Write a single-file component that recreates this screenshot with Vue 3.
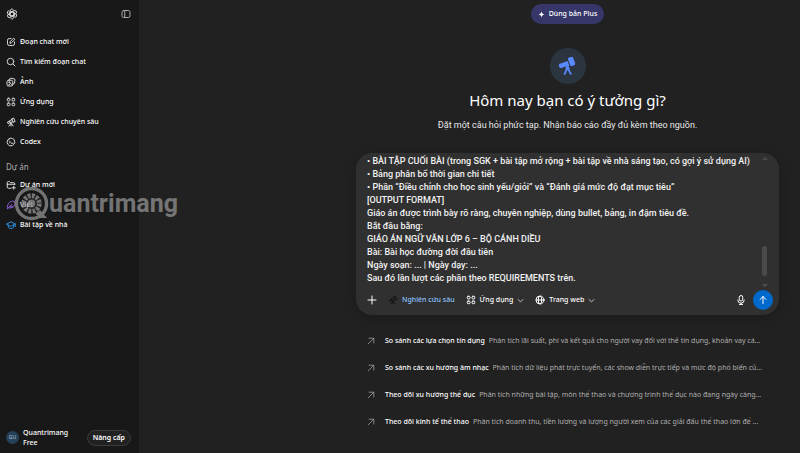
<script setup>
import { ref } from 'vue'

const nav = [
  { label: 'Đoạn chat mới', icon: 'edit' },
  { label: 'Tìm kiếm đoạn chat', icon: 'search' },
  { label: 'Ảnh', icon: 'images' },
  { label: 'Ứng dụng', icon: 'apps' },
  { label: 'Nghiên cứu chuyên sâu', icon: 'scope' },
  { label: 'Codex', icon: 'codex' },
]
const projects = [
  { label: 'Dự án mới', icon: 'folder' },
  { label: 'Viết', icon: 'pen' },
  { label: 'Bài tập về nhà', icon: 'cap' },
]
const suggestions = [
  { title: 'So sánh các lựa chọn tín dụng', text: 'Phân tích lãi suất, phí và kết quả cho người vay đối với thẻ tín dụng, khoản vay cá...' },
  { title: 'So sánh các xu hướng âm nhạc', text: 'Phân tích dữ liệu phát trực tuyến, các show diễn trực tiếp và mức độ phổ biến củ...' },
  { title: 'Theo dõi xu hướng thể dục', text: 'Phân tích những bài tập, môn thể thao và chương trình thể dục nào đang ngày càng...' },
  { title: 'Theo dõi kinh tế thể thao', text: 'Phân tích doanh thu, tiền lương và lượng người xem của các giải đấu thể thao lớn để ...' },
]
const prompt = ref(`• BÀI TẬP CUỐI BÀI (trong SGK + bài tập mở rộng + bài tập về nhà sáng tạo, có gợi ý sử dụng AI)
• Bảng phân bổ thời gian chi tiết
• Phần “Điều chỉnh cho học sinh yếu/giỏi” và “Đánh giá mức độ đạt mục tiêu”
[OUTPUT FORMAT]
Giáo án được trình bày rõ ràng, chuyên nghiệp, dùng bullet, bảng, in đậm tiêu đề.
Bắt đầu bằng:
GIÁO ÁN NGỮ VĂN LỚP 6 – BỘ CÁNH DIỀU
Bài: Bài học đường đời đầu tiên
Ngày soạn: ... | Ngày dạy: ...
Sau đó lần lượt các phần theo REQUIREMENTS trên.`)
</script>

<template>
  <svg class="sprite" aria-hidden="true">
    <symbol id="edit" viewBox="0 0 20 20"><path d="M10 3H6.500A3.500 3.500 0 0 0 3 6.500v7A3.500 3.500 0 0 0 6.500 17h7a3.500 3.500 0 0 0 3.500-3.500V10M8 12l.5-3 6-6a1.800 1.800 0 0 1 2.500 2.500l-6 6Z" /></symbol>
    <symbol id="search" viewBox="0 0 20 20"><circle cx="9" cy="9" r="6.500" /><path d="m14 14 4 4" /></symbol>
    <symbol id="images" viewBox="0 0 20 20"><path d="M7 5.500 7.500 4a2 2 0 0 1 2.400-1.500l6.500 1.300A2 2 0 0 1 18 6.200l-1.200 6.500a2 2 0 0 1-2.300 1.600" /><rect x="2" y="6.500" width="11.500" height="11.500" rx="3" /><circle cx="6.500" cy="10.500" r="1.200" /><path d="m4 17 5-4 4 3" /></symbol>
    <symbol id="apps" viewBox="0 0 20 20"><rect x="2.500" y="2.500" width="5.500" height="5.500" rx="2" /><rect x="12" y="2.500" width="5.500" height="5.500" rx="2" /><rect x="2.500" y="12" width="5.500" height="5.500" rx="2" /><rect x="12" y="12" width="5.500" height="5.500" rx="2" /></symbol>
    <symbol id="scope" viewBox="0 0 20 20"><path d="m12 3.500 3.500-1.300 2.700 6.800-3.500 1.300ZM12.500 5 7 7.500l1.500 4 5.500-2M7.300 8.300l-4.500 2 1 2.700 4.700-1.700M10 12.500l-4 5.500M10 12.500v5.500M10.500 12.500 14 18" /></symbol>
    <symbol id="codex" viewBox="0 0 20 20"><path d="M7 3.200a5 5 0 0 1 6 0 5 5 0 0 1 4 5 5 5 0 0 1-1.500 6.300A5 5 0 0 1 10 17.500a5 5 0 0 1-6-3A5 5 0 0 1 3 8a5 5 0 0 1 4-4.800ZM7 8l1.700 2L7 12.200M11 12.500h3" /></symbol>
    <symbol id="folder" viewBox="0 0 20 20"><path d="M10 16.500H5A2.500 2.500 0 0 1 2.500 14V5.500A2.500 2.500 0 0 1 5 3h2l2.200 2.300H15A2.500 2.500 0 0 1 17.500 8v1.500M2.500 8.500h15M15.500 12.500v6M12.500 15.500h6" /></symbol>
    <symbol id="pen" viewBox="0 0 20 20"><path d="M3 17.500C1.800 9 6 3 13 2.500h4.500V7C17.500 14 12 17 5.500 15.500M3 17.500 11.500 9M8 12.500h5" /></symbol>
    <symbol id="cap" viewBox="0 0 20 20"><path d="M1.500 8 10 3.500 18.500 8 10 12.500ZM4.500 10v4.500c3 3.500 8 3.500 11 0V10M18.500 8v5" /></symbol>
    <symbol id="arrow" viewBox="0 0 20 20"><path d="M3 17 17 3M5 3h12v12" /></symbol>
    <symbol id="chevron" viewBox="0 0 20 20"><path d="m3 7 7 7 7-7" /></symbol>
    <symbol id="globe" viewBox="0 0 20 20"><circle cx="10" cy="10" r="8" /><ellipse cx="10" cy="10" rx="3.500" ry="8" /><path d="M2 10h16" /></symbol>
  </svg>

  <div class="app">
    <aside class="sidebar">
      <div class="top">
        <a href="#" class="logo" aria-label="ChatGPT">
          <svg viewBox="0 0 24 24" class="knot">
            <g v-for="n in 6" :key="n" :transform="`rotate(${n * 60} 12 12)`">
              <path d="M8 12V6.200a4 4 0 0 1 6.800-2.900M8 9.600l5-2.900a4 4 0 0 1 2 0M12 7.400l4 2.300" />
            </g>
          </svg>
        </a>
        <button class="plain" aria-label="Thanh bên">
          <svg viewBox="0 0 20 20" class="icon panel"><rect x="2" y="3" width="16" height="14" rx="3.500" /><path d="M7.500 3v14" /></svg>
        </button>
      </div>
      <nav class="menu">
        <a v-for="item in nav" :key="item.label" href="#" class="row"><svg class="icon"><use :href="'#' + item.icon" /></svg>{{ item.label }}</a>
      </nav>
      <h2 class="heading">Dự án</h2>
      <nav class="menu">
        <a v-for="item in projects" :key="item.label" href="#" class="row"><svg class="icon" :class="item.icon"><use :href="'#' + item.icon" /></svg>{{ item.label }}</a>
      </nav>
      <div class="watermark" aria-hidden="true">
        <svg viewBox="0 0 36 36" class="mark">
          <circle cx="18" cy="18" r="15.500" fill="none" stroke="currentColor" stroke-width="3.500" />
          <circle cx="18" cy="18" r="8" fill="none" stroke="currentColor" stroke-width="5" stroke-dasharray="3 1.200" />
          <circle cx="18" cy="18" r="4" fill="currentColor" />
          <path d="m22 28 5-3 7 8h-8Z" fill="currentColor" />
        </svg>
        <span>uantrimang</span>
      </div>
      <div class="account">
        <span class="avatar">GU</span>
        <div class="who"><span>Quantrimang</span><small>Free</small></div>
        <button class="upgrade">Nâng cấp</button>
      </div>
    </aside>

    <main class="main">
      <button class="plus"><svg viewBox="0 0 20 20"><path d="M10 1c1 6 3 8 9 9-6 1-8 3-9 9-1-6-3-8-9-9 6-1 8-3 9-9Z" /></svg>Dùng bản Plus</button>
      <div class="hero">
        <svg viewBox="0 0 20 20"><g transform="rotate(-20 10 10)"><rect x="12.500" y="1.500" width="6" height="10" rx="2" /><path d="M2.500 4.500h9v6h-3a3 3 0 0 0-3-1h-3A2 2 0 0 1 .5 8V6.500a2 2 0 0 1 2-2Z" /></g><circle cx="9.500" cy="12.500" r="2.200" /><path d="m8.700 13.500-2.500 5.200M10.300 13.500l2.800 5.200" fill="none" stroke="currentColor" stroke-width="2" stroke-linecap="round" /></svg>
      </div>
      <h1>Hôm nay bạn có ý tưởng gì?</h1>
      <p class="sub">Đặt một câu hỏi phức tạp. Nhận báo cáo đầy đủ kèm theo nguồn.</p>

      <form class="composer" @submit.prevent>
        <div class="field">
          <textarea v-model="prompt" rows="10" aria-label="Tin nhắn" spellcheck="false"></textarea>
          <div class="scroll" aria-hidden="true"><i class="up"></i><i class="thumb"></i><i class="down"></i></div>
        </div>
        <div class="tools">
          <button type="button" class="plain add" aria-label="Thêm"><svg class="icon" viewBox="0 0 20 20"><path d="M10 2v16M2 10h16" /></svg></button>
          <button type="button" class="plain research"><svg class="icon"><use href="#scope" /></svg>Nghiên cứu sâu</button>
          <button type="button" class="plain apps"><svg class="icon"><use href="#apps" /></svg>Ứng dụng<svg class="icon chev"><use href="#chevron" /></svg></button>
          <button type="button" class="plain"><svg class="icon"><use href="#globe" /></svg>Trang web<svg class="icon chev"><use href="#chevron" /></svg></button>
          <div class="actions">
            <button type="button" class="plain" aria-label="Đọc chính tả"><svg class="icon" viewBox="0 0 20 20"><rect x="6.500" y="1" width="7" height="11" rx="3.500" /><path d="M3.500 10a6.500 6.500 0 0 0 13 0M10 16.500V19M7 19h6" /></svg></button>
            <button class="send" aria-label="Gửi"><svg viewBox="0 0 20 20"><path d="M10 17V3M4 9l6-6 6 6" /></svg></button>
          </div>
        </div>
      </form>

      <ul class="suggestions">
        <li v-for="s in suggestions" :key="s.title">
          <a href="#"><svg class="icon"><use href="#arrow" /></svg><strong>{{ s.title }}</strong><span>{{ s.text }}</span></a>
        </li>
      </ul>
    </main>
  </div>
</template>

<style>
body { background: #212121; }
</style>

<style scoped>
.app { display: flex; min-height: 100vh; box-sizing: border-box; color: #fff; font: 7px/12px "Noto Sans", "Open Sans", sans-serif; }
.sprite { position: absolute; width: 0; height: 0; }
button { font: inherit; color: inherit; cursor: pointer; }
a { color: inherit; text-decoration: none; }
.icon { width: 10px; height: 10px; flex: none; fill: none; stroke: currentColor; stroke-width: 2; stroke-linecap: round; stroke-linejoin: round; }
.plain { display: flex; align-items: center; gap: 4px; padding: 0; border: 0; background: none; }
.sidebar { position: relative; display: flex; flex-direction: column; width: 139px; flex: none; box-sizing: border-box; background: #181818; }
.top { display: flex; align-items: center; justify-content: space-between; padding: 8px 8px 12px 6px; }
.logo { display: flex; }
.knot { width: 12px; height: 12px; fill: none; stroke: #d8d8d8; stroke-width: 2; }
.panel { color: #a8a8a8; }
.menu { display: flex; flex-direction: column; }
.row { display: flex; align-items: center; gap: 4px; height: 20px; padding-left: 6px; white-space: nowrap; font-weight: 500; }
.row .icon { color: #d8d8d8; }
.heading { margin: 9px 0 2px; padding-left: 6px; font-size: 8px; line-height: 12px; font-weight: 400; color: #afafaf; }
.row .pen { color: #8b5fd0; }
.row .cap { color: #2f8fdd; }
.watermark { position: absolute; left: 14px; top: 186px; display: flex; align-items: center; color: #8a8a8a; opacity: .8; font: 700 25px/32px Roboto, sans-serif; pointer-events: none; }
.mark { width: 35px; height: 35px; }
.account { display: flex; align-items: center; gap: 4px; margin-top: auto; padding: 0 8px 5px 6px; }
.avatar { width: 13px; height: 13px; border-radius: 50%; background: #26415a; color: #b8c8d8; font-size: 5px; line-height: 13px; text-align: center; }
.who { display: flex; flex-direction: column; line-height: 11px; font-weight: 500; }
.who small { font-size: 7px; line-height: 10px; }
.upgrade { margin-left: auto; height: 16px; padding: 0 5px; border: 1px solid #3a3a3a; border-radius: 8px; background: #212121; font-weight: 600; }
.main { display: flex; flex: 1; min-width: 0; flex-direction: column; align-items: center; padding: 4px 21px 0 217px; }
.plus { display: flex; align-items: center; gap: 4px; height: 20px; padding: 0 7px; border: 0; border-radius: 10px; background: #373669; font-weight: 500; }
.plus svg { width: 7px; height: 7px; fill: #fff; }
.hero { display: grid; place-items: center; width: 36px; height: 36px; margin-top: 24px; border-radius: 50%; background: #2b3540; color: #5a88ff; }
.hero svg { width: 18px; height: 18px; fill: currentColor; }
h1 { margin: 5px 0 0; font-size: 15px; line-height: 22px; font-weight: 400; white-space: nowrap; }
.sub { margin: 8px 0 0; font: 400 9px/12px Roboto, "Noto Sans", sans-serif; color: #e8e8e8; white-space: nowrap; }
.composer { align-self: stretch; margin-top: 22px; padding: 1px 6px 5px 11px; border-radius: 16px; background: #303030; box-shadow: 0 3px 12px #0003; }
.field { display: flex; }
textarea { flex: 1; min-width: 0; height: 136px; padding: 1px 0 0; box-sizing: border-box; border: 0; outline: 0; resize: none; overflow: hidden; background: none; color: #f2f2f2; font: 500 9px/13px Roboto, "Noto Sans", sans-serif; white-space: pre; }
.scroll { display: flex; flex-direction: column; align-items: center; width: 5px; margin: 3px 6px 3px 0; }
.scroll i { border: 3px solid transparent; border-top: 0; }
.scroll .up { border-bottom-color: #484848; }
.scroll .thumb { width: 5px; height: 30px; margin-top: auto; border: 0; border-radius: 3px; background: #4a4a4a; }
.scroll .down { margin: 8px 0 0; border-top: 3px solid #505050; border-bottom: 0; }
.tools { display: flex; align-items: center; white-space: nowrap; gap: 11px; font-weight: 500; }
.tools .chev { width: 7px; height: 7px; }
.research { color: #8cc4ff; }
.research .icon { color: #151515; }
.actions { display: flex; align-items: center; gap: 7px; margin-left: auto; }
.send { display: grid; place-items: center; width: 20px; height: 20px; padding: 0; border: 0; border-radius: 50%; background: #0169cc; }
.send svg { width: 10px; height: 10px; fill: none; stroke: #fff; stroke-width: 2; stroke-linecap: round; stroke-linejoin: round; }
.suggestions { align-self: stretch; margin: 12px 0 0; padding: 0 9px 0 11px; list-style: none; }
.suggestions a { display: flex; align-items: center; height: 27px; white-space: nowrap; }
.suggestions .icon { width: 8px; height: 8px; margin-right: 10px; color: #a0a0a0; }
.suggestions strong { margin-right: 4px; font-weight: 500; }
.suggestions span { overflow: hidden; text-overflow: ellipsis; color: #afafaf; }
</style>
